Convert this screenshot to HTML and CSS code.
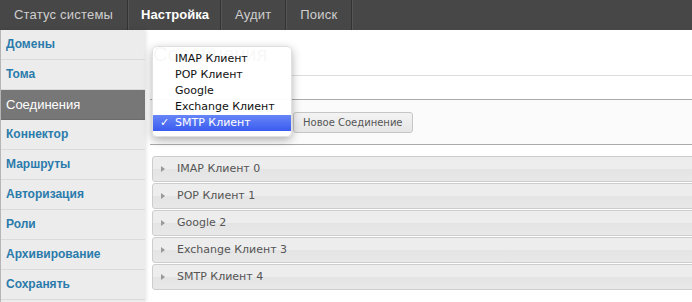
FILE: index.html
```html
<!DOCTYPE html>
<html>
<head lang="ru">
  <meta charset="UTF-8">
  <title>Соединения</title>
  <link rel="stylesheet" href="styles.css">
</head>
<body>
<div class="top-nav">
  <a class="nav-tab" href="javascript:void(0);">Статус системы</a>
  <a class="nav-tab active" href="javascript:void(0);">Настройка</a>
  <a class="nav-tab" href="javascript:void(0);">Аудит</a>
  <a class="nav-tab" href="javascript:void(0);">Поиск</a>
</div>
<div class="page">
  <ul class="side-menu">
    <li><a href="javascript:void(0);">Домены</a></li>
    <li><a href="javascript:void(0);">Тома</a></li>
    <li class="active"><a href="javascript:void(0);">Соединения</a></li>
    <li><a href="javascript:void(0);">Коннектор</a></li>
    <li><a href="javascript:void(0);">Маршруты</a></li>
    <li><a href="javascript:void(0);">Авторизация</a></li>
    <li><a href="javascript:void(0);">Роли</a></li>
    <li><a href="javascript:void(0);">Архивирование</a></li>
    <li><a href="javascript:void(0);">Сохранять</a></li>
  </ul>
  <div class="content">
    <h2 class="content-title">Соединения</h2>
    <div class="toolbar">
      <div class="type-select">
        <ul class="type-menu">
          <li>IMAP Клиент</li>
          <li>POP Клиент</li>
          <li>Google</li>
          <li>Exchange Клиент</li>
          <li class="checked">SMTP Клиент</li>
        </ul>
      </div>
      <a class="toolbar-button" href="javascript:void(0);">Новое Соединение</a>
    </div>
    <div class="conn-list">
      <div class="conn-row"><span class="arrow"></span>IMAP Клиент 0</div>
      <div class="conn-row"><span class="arrow"></span>POP Клиент 1</div>
      <div class="conn-row"><span class="arrow"></span>Google 2</div>
      <div class="conn-row"><span class="arrow"></span>Exchange Клиент 3</div>
      <div class="conn-row"><span class="arrow"></span>SMTP Клиент 4</div>
    </div>
  </div>
</div>
</body>
</html>
```
FILE: styles.css
```css
ul, li, div, h2, a, span {
  padding: 0px;
  margin: 0px;
}

body {
  margin: 0px;
  background: #ffffff;
  font-family: "Liberation Sans", Arial, sans-serif;
  overflow: hidden;
}

a {
  text-decoration: none;
}

ul {
  list-style: none;
}

.top-nav {
  display: flex;
  height: 30px;
  background: #474747;
}

.nav-tab {
  display: block;
  padding: 0px 14px;
  line-height: 30px;
  height: 30px;
  font-size: 13px;
  letter-spacing: 0.2px;
  color: #cfcfcf;
  border-right: 1px solid #333333;
  box-shadow: 1px 0px 0px #555555;
}

.nav-tab.active {
  padding: 0px 11px 0px 13px;
  color: #ffffff;
  font-weight: bold;
  letter-spacing: 0px;
}

.page {
  display: flex;
  height: 272px;
}

.side-menu {
  width: 144px;
  flex: none;
  background: #ececec;
  border-left: 1px solid #b5b5b5;
  box-shadow: 1px 0px 4px rgba(0, 0, 0, 0.12);
  position: relative;
  z-index: 1;
}

.side-menu li {
  height: 29px;
  border-bottom: 1px solid #dadada;
}

.side-menu li a {
  display: block;
  padding-left: 5px;
  line-height: 29px;
  font-size: 12px;
  font-weight: bold;
  color: #2a7bab;
}

.side-menu li.active {
  background: #777777;
  border-bottom-color: #6c6c6c;
}

.side-menu li.active a {
  color: #ffffff;
  font-weight: normal;
  font-size: 13px;
}

.content {
  flex: 1;
  padding-left: 7px;
  min-width: 0;
}

.content-title {
  margin-top: 12px;
  padding: 0px 0px 9px 1px;
  line-height: 24px;
  font-size: 20px;
  font-weight: normal;
  color: #333333;
  border-bottom: 1px solid #dddddd;
}

.toolbar {
  display: flex;
  align-items: center;
  margin-top: 23px;
  height: 44px;
  background: #fbfbfb;
  border-top: 1px solid #aaaaaa;
  border-bottom: 1px solid #aaaaaa;
  margin-left: -2px;
  padding-left: 2px;
}

.type-select {
  position: relative;
  width: 134px;
  height: 20px;
  border: 1px solid #bbbbbb;
  border-radius: 4px;
  background: #f4f4f4;
  font-family: "DejaVu Sans", Verdana, sans-serif;
  font-size: 11px;
  line-height: 20px;
}

.type-menu {
  position: absolute;
  left: -1px;
  top: -66px;
  width: 138px;
  padding: 4px 0px 5px 0px;
  background: rgba(255, 255, 255, 0.96);
  border: 1px solid rgba(0, 0, 0, 0.12);
  border-radius: 5px;
  box-shadow: 0px 3px 10px rgba(0, 0, 0, 0.3);
  z-index: 10;
}

.type-menu li {
  height: 16px;
  line-height: 16px;
  padding-left: 22px;
  color: #111111;
  position: relative;
}

.type-menu li.checked {
  background: linear-gradient(#6786f8, #3a5bef);
  color: #ffffff;
}

.type-menu li.checked:before {
  content: "\2713";
  position: absolute;
  left: 7px;
  top: 0px;
  font-size: 11px;
}

.toolbar-button {
  display: block;
  margin-left: 5px;
  height: 19px;
  line-height: 19px;
  padding: 0px 9px;
  font-family: "DejaVu Sans", Verdana, sans-serif;
  font-size: 10px;
  color: #555555;
  background: linear-gradient(#f3f3f3, #e6e6e6);
  border: 1px solid #c6c6c6;
  border-radius: 3px;
}

.conn-list {
  margin-top: 11px;
  margin-right: -6px;
}

.conn-row {
  height: 24px;
  line-height: 24px;
  margin-bottom: 1px;
  padding-left: 24px;
  position: relative;
  font-family: "DejaVu Sans", Verdana, sans-serif;
  font-size: 11px;
  color: #555555;
  background: linear-gradient(#ededed 50%, #e4e4e4 50%, #e8e8e8);
  border: 1px solid #cdcdcd;
  border-radius: 3px;
}

.conn-row .arrow {
  position: absolute;
  left: 8px;
  top: 9px;
  width: 0px;
  height: 0px;
  border-top: 3px solid transparent;
  border-bottom: 3px solid transparent;
  border-left: 4px solid #999999;
}
```
